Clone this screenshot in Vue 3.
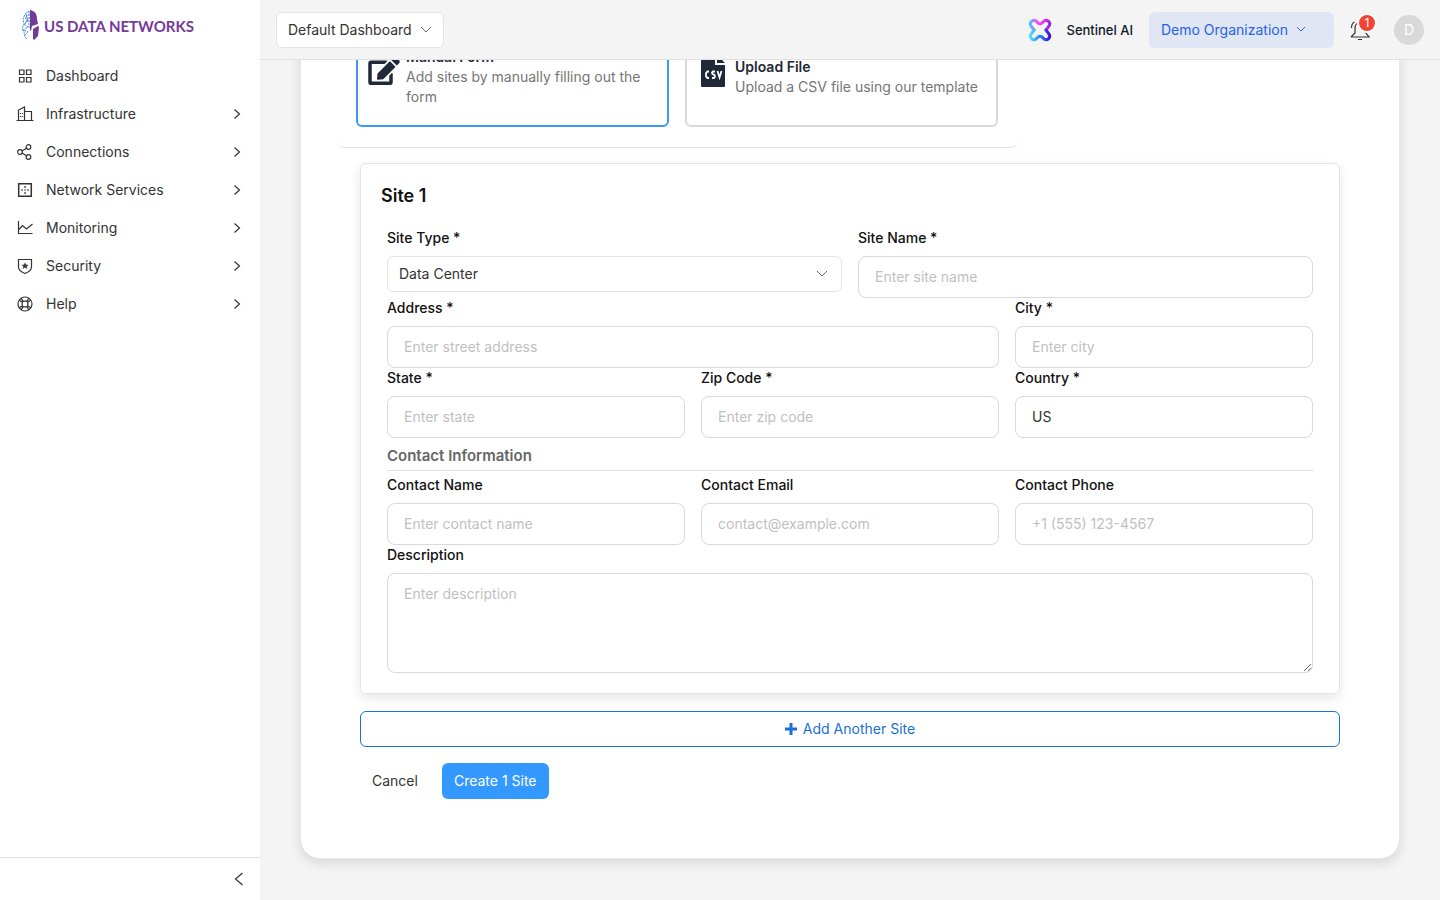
<script setup>
import { ref, reactive } from 'vue'

const menu = [
  { name: 'Dashboard', icon: 'grid', children: false },
  { name: 'Infrastructure', icon: 'building', children: true },
  { name: 'Connections', icon: 'share', children: true },
  { name: 'Network Services', icon: 'network', children: true },
  { name: 'Monitoring', icon: 'chart', children: true },
  { name: 'Security', icon: 'shield', children: true },
  { name: 'Help', icon: 'help', children: true },
]

const fields = [
  { id: 'name', label: 'Site Name *', placeholder: 'Enter site name', size: 'half' },
  { id: 'address', label: 'Address *', placeholder: 'Enter street address', size: 'wide' },
  { id: 'city', label: 'City *', placeholder: 'Enter city', size: 'third' },
  { id: 'state', label: 'State *', placeholder: 'Enter state', size: 'third' },
  { id: 'zip', label: 'Zip Code *', placeholder: 'Enter zip code', size: 'third' },
  { id: 'country', label: 'Country *', placeholder: '', size: 'third' },
]

const contactFields = [
  { id: 'contactName', label: 'Contact Name', placeholder: 'Enter contact name' },
  { id: 'contactEmail', label: 'Contact Email', placeholder: 'contact@example.com' },
  { id: 'contactPhone', label: 'Contact Phone', placeholder: '+1 (555) 123-4567' },
]

const method = ref('manual')
const site = reactive({ type: 'Data Center', country: 'US' })
</script>

<template>
  <div class="layout">
    <aside class="sidebar">
      <a href="#" class="logo">
        <svg width="20" height="30" viewBox="0 0 20 30">
          <path
            d="M8 1L4 4 2 9l1 5-2 5 2 3 1 5 2 2M8 4L4 8l3 3-4 3 4 3-5 3 5 2-3 3M7 8l-3 6M5 4l2 7M8 1v17"
            fill="none"
            stroke="#3b82d6"
            stroke-width="1"
            stroke-dasharray="2 1"
          />
          <path
            d="M9 0c5 1 7 4 7 9l1 5-6 2-1 5-1-1zM12 19l5-3 1 1-1 9-4 4-1-1z"
            fill="#743a9b"
          />
        </svg>
        <span>US DATA NETWORKS</span>
      </a>
      <nav>
        <a v-for="item in menu" :key="item.name" href="#" class="menu-item">
          <svg class="menu-icon" width="18" height="18" viewBox="0 0 18 18">
            <g v-if="item.icon === 'grid'">
              <path d="M3.500 3h4.500v4.500H3.500zM10.500 3H15v4.500h-4.500zM3.500 10.500h4.500V15H3.500zM10.500 10.500H15V15h-4.500z" />
            </g>
            <g v-else-if="item.icon === 'building'">
              <path d="M.5 15.500h17M2.500 15.500V5l6-3v13.500M8.500 6.500h7v9" />
              <path d="M4.500 8v1M6.500 8v1M4.500 11v1M6.500 11v1" />
            </g>
            <g v-else-if="item.icon === 'share'">
              <circle cx="4" cy="9" r="2.300" />
              <circle cx="12.500" cy="4" r="2.300" />
              <circle cx="12.500" cy="14" r="2.300" />
              <path d="M6 8l4.500-2.800M6 10l4.500 2.800" />
            </g>
            <g v-else-if="item.icon === 'network'">
              <path d="M2.700 2.700h12.600v12.600H2.700z" stroke-width="1.500" />
              <path d="M9 5v2M9 8.200v1.600M9 11v2M5 9h2M11 9h2" />
            </g>
            <g v-else-if="item.icon === 'chart'">
              <path d="M2.500 2v12.500h14M3 10.500l3.500-4 4 3.500 6-5" />
            </g>
            <g v-else-if="item.icon === 'shield'">
              <path d="M2.500 2.500h13V10c0 3-4 5.500-6.500 6.500C6.500 15.500 2.500 13 2.500 10z" />
              <path
                d="M9 5.200l1 2.500h2.600l-2 1.700.8 2.700L9 10.600l-2.400 1.500.8-2.700-2-1.700H8z"
                class="solid"
              />
            </g>
            <g v-else>
              <circle cx="9" cy="9" r="7" />
              <rect x="6.200" y="6.200" width="5.600" height="5.600" rx="1.500" />
              <path d="M5 3.200L7.200 6.300M3.200 5l3.100 2.200M13 3.200l-2.200 3.100M14.800 5l-3.100 2.200M5 14.800l2.200-3.100M3.200 13l3.100-2.200M13 14.800l-2.200-3.100M14.800 13l-3.100-2.200" />
            </g>
          </svg>
          <span>{{ item.name }}</span>
          <svg v-if="item.children" class="arrow" width="8" height="12" viewBox="0 0 8 12">
            <path d="M1.500 1.500L6.500 6l-5 4.500" />
          </svg>
        </a>
      </nav>
      <div class="sidebar-footer">
        <button type="button" class="collapse" aria-label="Collapse menu">
          <svg width="10" height="14" viewBox="0 0 10 14">
            <path d="M8.500 1L1.500 7l7 6" />
          </svg>
        </button>
      </div>
    </aside>

    <div class="main">
      <header class="topbar">
        <button type="button" class="dashboard-picker">
          Default Dashboard
          <svg width="12" height="8" viewBox="0 0 12 8"><path d="M1 1l5 5 5-5" /></svg>
        </button>
        <div class="topbar-right">
          <a href="#" class="sentinel">
            <svg width="24" height="24" viewBox="0 0 24 24">
              <defs>
                <linearGradient id="sentinel-top" x1="0" y1="0" x2="1" y2="0">
                  <stop offset="0" stop-color="#40c9ff" />
                  <stop offset=".25" stop-color="#e65cf5" />
                  <stop offset=".7" stop-color="#f035f0" />
                  <stop offset="1" stop-color="#8a25e8" />
                </linearGradient>
                <linearGradient id="sentinel-bottom" x1="0" y1="0" x2="1" y2="0">
                  <stop offset="0" stop-color="#55dcff" />
                  <stop offset=".5" stop-color="#2187f5" />
                  <stop offset="1" stop-color="#3d11d9" />
                </linearGradient>
              </defs>
              <g fill="none" stroke-width="3" stroke-linecap="round">
                <path
                  d="M6 12L3 8a3.600 3.600 0 0 1 5-5l2 2q2 1.500 4 0l2-2a3.600 3.600 0 0 1 5 5l-3 4"
                  stroke="url(#sentinel-top)"
                />
                <path
                  d="M6 12l-3 4a3.600 3.600 0 0 0 5 5l2-2q2-1.500 4 0l2 2a3.600 3.600 0 0 0 5-5l-3-4"
                  stroke="url(#sentinel-bottom)"
                />
              </g>
            </svg>
            <span>Sentinel AI</span>
          </a>
          <button type="button" class="org-picker">
            Demo Organization
            <svg width="10" height="7" viewBox="0 0 10 7"><path d="M1 1l4 4 4-4" /></svg>
          </button>
          <button type="button" class="bell" aria-label="Notifications">
            <svg width="20" height="20" viewBox="0 0 20 20">
              <path d="M1 17h18l-3-4V8c0-3-2-5-6-5S5 5 5 8v5l-4 4M8 19.500h4M1.500 8c0-3 1-5 3-6" />
            </svg>
            <span class="badge">1</span>
          </button>
          <button type="button" class="avatar">D</button>
        </div>
      </header>

      <main class="content">
        <form class="card" @submit.prevent>
          <section class="methods">
            <button
              type="button"
              class="method"
              :class="{ selected: method === 'manual' }"
              @click="method = 'manual'"
            >
              <svg width="32" height="28" viewBox="0 0 576 512" fill="currentColor">
                <path d="M402.600 83.200l90.200 90.200c3.800 3.800 3.800 10 0 13.800L274.400 405.600l-92.800 10.300c-12.400 1.400-22.900-9.100-21.500-21.500l10.300-92.800L388.800 83.200c3.800-3.800 10-3.800 13.800 0zm162-22.900l-48.800-48.800c-15.200-15.200-39.900-15.200-55.200 0l-35.400 35.400c-3.800 3.800-3.800 10 0 13.800l90.200 90.200c3.800 3.800 10 3.800 13.800 0l35.400-35.400c15.200-15.300 15.200-40 0-55.200zM384 346.200V448H64V128h229.800c3.200 0 6.200-1.300 8.500-3.500l40-40c7.600-7.600 2.200-20.500-8.500-20.500H48C21.500 64 0 85.500 0 112v352c0 26.500 21.500 48 48 48h352c26.500 0 48-21.500 48-48V306.200c0-10.700-12.900-16-20.500-8.500l-40 40c-2.200 2.300-3.500 5.300-3.500 8.500z" />
              </svg>
              <span class="method-text">
                <strong>Manual Form</strong>
                <span>Add sites by manually filling out the form</span>
              </span>
            </button>
            <button
              type="button"
              class="method"
              :class="{ selected: method === 'csv' }"
              @click="method = 'csv'"
            >
              <svg width="32" height="32" viewBox="0 0 32 32">
                <path d="M5 0h13v10h10v21a1 1 0 0 1-1 1H5a1 1 0 0 1-1-1V1zM20 0l8 8h-8z" fill="#1f2937" />
                <path
                  d="M12 16.500h-1.500l-1.500 1.500v3.500l1.500 1.500H12M18 16.500h-2l-1 1 .5 1.500 2 1 .5 1.500-1 1.500h-2M20.500 16l2 6.500 2-6.500"
                  fill="none"
                  stroke="#fff"
                  stroke-width="1.800"
                />
              </svg>
              <span class="method-text">
                <strong>Upload File</strong>
                <span>Upload a CSV file using our template</span>
              </span>
            </button>
          </section>

          <div class="sites">
            <section class="site">
              <h2>Site 1</h2>
              <div class="fields">
                <div class="field half">
                  <label for="type">Site Type *</label>
                  <div class="select">
                    <select id="type" v-model="site.type">
                      <option>Data Center</option>
                    </select>
                    <svg width="12" height="8" viewBox="0 0 12 8"><path d="M1 1l5 5 5-5" /></svg>
                  </div>
                </div>
                <div v-for="field in fields" :key="field.id" class="field" :class="field.size">
                  <label :for="field.id">{{ field.label }}</label>
                  <input
                    :id="field.id"
                    v-model="site[field.id]"
                    type="text"
                    :placeholder="field.placeholder"
                  />
                </div>
                <h3>Contact Information</h3>
                <div v-for="field in contactFields" :key="field.id" class="field third">
                  <label :for="field.id">{{ field.label }}</label>
                  <input
                    :id="field.id"
                    v-model="site[field.id]"
                    type="text"
                    :placeholder="field.placeholder"
                  />
                </div>
                <div class="field full">
                  <label for="description">Description</label>
                  <textarea
                    id="description"
                    v-model="site.description"
                    placeholder="Enter description"
                  ></textarea>
                </div>
              </div>
            </section>
            <button type="button" class="add">
              <svg width="12" height="12" viewBox="0 0 12 12">
                <path d="M6 0v12M0 6h12" />
              </svg>
              Add Another Site
            </button>
            <div class="actions">
              <button type="button" class="cancel">Cancel</button>
              <button type="submit" class="create">Create 1 Site</button>
            </div>
          </div>
        </form>
      </main>
    </div>
  </div>
</template>

<style>
body {
  margin: 0;
}
</style>

<style scoped>
* {
  box-sizing: border-box;
}
.layout {
  display: flex;
  height: 100vh;
  font-family: Inter, 'Liberation Sans', sans-serif;
  font-size: 14px;
  line-height: 20px;
  color: #333;
  background-color: #f4f4f4;
}
button,
input,
select,
textarea {
  font: inherit;
  color: inherit;
}
button {
  cursor: pointer;
  border: none;
  background: none;
  padding: 0;
}
a {
  color: inherit;
  text-decoration: none;
}
svg {
  flex-shrink: 0;
}

.sidebar {
  display: flex;
  flex-direction: column;
  flex-shrink: 0;
  width: 260px;
  background-color: white;
}
.logo {
  display: flex;
  align-items: flex-start;
  gap: 3px;
  height: 57px;
  padding: 10px 21px;
  color: #743a9b;
  font-family: Lato, sans-serif;
  font-size: 15px;
  font-weight: 700;
  line-height: 32px;
}
.menu-item {
  display: flex;
  align-items: center;
  gap: 12px;
  height: 38px;
  padding: 0 19px 0 16px;
}
.menu-icon,
.arrow,
.collapse svg,
.bell svg {
  fill: none;
  stroke: #333;
  stroke-width: 1.2;
}
.menu-icon .solid {
  fill: #333;
  stroke: none;
}
.arrow {
  margin-left: auto;
}
.sidebar-footer {
  display: flex;
  justify-content: flex-end;
  margin-top: auto;
  height: 43px;
  padding: 0 12px;
  border-top: 1px solid #e0e0e0;
}
.collapse {
  display: grid;
  place-items: center;
  width: 18px;
}

.main {
  display: flex;
  flex-direction: column;
  flex: 1;
  min-width: 0;
}
.topbar {
  display: flex;
  align-items: center;
  justify-content: space-between;
  flex-shrink: 0;
  height: 60px;
  padding: 0 16px;
  border-bottom: 1px solid #e0e0e2;
}
.dashboard-picker {
  display: flex;
  align-items: center;
  gap: 8px;
  height: 36px;
  padding: 0 11px;
  background-color: white;
  border: 1px solid #e4e4e8;
  border-radius: 6px;
}
.dashboard-picker svg,
.org-picker svg,
.select svg {
  fill: none;
  stroke: #666;
  stroke-width: 1;
}
.topbar-right {
  display: flex;
  align-items: center;
  gap: 16px;
}
.sentinel {
  display: flex;
  align-items: center;
  gap: 14px;
  color: #111827;
  font-size: 13px;
  font-weight: 500;
}
.org-picker {
  display: flex;
  align-items: center;
  gap: 8px;
  width: 185px;
  height: 36px;
  padding: 0 12px;
  border-radius: 6px;
  background-color: #e0e6f4;
  color: #2563eb;
  white-space: nowrap;
}
.org-picker svg {
  stroke: #2563eb;
}
.bell {
  position: relative;
  height: 20px;
  margin-right: 8px;
}
.badge {
  position: absolute;
  top: -7px;
  right: -7px;
  width: 20px;
  height: 20px;
  border: 2px solid white;
  border-radius: 50%;
  background-color: #f44336;
  color: white;
  font-size: 12px;
  line-height: 16px;
}
.avatar {
  width: 30px;
  height: 30px;
  border-radius: 50%;
  background-color: #d9d9d9;
  color: white;
}

/* reversed column keeps the scroll position at the bottom of the form */
.content {
  display: flex;
  flex-direction: column-reverse;
  flex: 1;
  min-height: 0;
  overflow-y: auto;
  scrollbar-width: none;
  padding: 0 40px 41px;
}
.card {
  padding: 36px 35px 59px;
  border: 1px solid #e5e7f0;
  border-radius: 20px;
  background-color: white;
  box-shadow: 0 4px 12px rgba(0, 0, 0, 0.12);
}
.methods {
  display: grid;
  grid-template-columns: 1fr 1fr;
  gap: 16px;
  max-width: 682px;
  padding: 20px;
  margin-bottom: 15px;
  border-bottom: 1px solid #e4e4e4;
  border-radius: 8px;
}
.method {
  display: flex;
  align-items: center;
  gap: 6px;
  height: 100px;
  padding: 0 10px;
  border: 2px solid #d9d9d9;
  border-radius: 6px;
  color: #1f2937;
  text-align: left;
}
.method.selected {
  border-color: #3b98f5;
}
.method svg {
  margin-bottom: 12px;
}
.method-text {
  display: flex;
  flex-direction: column;
}
.method-text strong {
  font-weight: 600;
}
.method-text span {
  color: #757575;
}

.sites {
  padding: 0 24px;
}
.site {
  padding: 20px;
  border: 1px solid #e4e4e8;
  border-radius: 6px;
  box-shadow: 0 4px 12px rgba(0, 0, 0, 0.1);
}
h2 {
  margin: 0 0 20px;
  color: #111;
  font-size: 18px;
  font-weight: 600;
  line-height: 24px;
}
.fields {
  display: grid;
  grid-template-columns: repeat(6, 1fr);
  column-gap: 16px;
  padding: 0 6px;
}
.field {
  min-width: 0;
}
.third {
  grid-column: span 2;
}
.half {
  grid-column: span 3;
}
.wide {
  grid-column: span 4;
}
.full {
  grid-column: span 6;
}
label {
  display: block;
  margin-bottom: 8px;
  color: #111;
  font-weight: 500;
}
input,
textarea {
  display: block;
  width: 100%;
  height: 42px;
  padding: 0 16px 2px;
  border: 1px solid #d9d9d9;
  border-radius: 8px;
  background-color: white;
}
textarea {
  height: 100px;
  padding: 10px 16px;
  resize: vertical;
}
input::placeholder,
textarea::placeholder {
  color: #bfbfbf;
}
.select {
  position: relative;
}
.select select {
  width: 100%;
  height: 36px;
  padding: 0 11px;
  border: 1px solid #e4e4e8;
  border-radius: 6px;
  background-color: white;
  appearance: none;
}
.select svg {
  position: absolute;
  top: 14px;
  right: 14px;
  pointer-events: none;
}
h3 {
  grid-column: span 6;
  margin: 0 0 4px;
  padding: 8px 0 4px;
  border-bottom: 1px solid #e0e0e0;
  color: #666;
  font-size: 15px;
  font-weight: 600;
}
.add {
  display: flex;
  align-items: center;
  justify-content: center;
  gap: 6px;
  width: 100%;
  height: 36px;
  margin: 17px 0 16px;
  border: 1px solid #1a73d9;
  border-radius: 6px;
  color: #1a6fd4;
}
.add svg {
  stroke: #1a6fd4;
  stroke-width: 3;
}
.actions {
  display: flex;
  gap: 12px;
}
.cancel,
.create {
  height: 36px;
  padding: 0 12px;
  border-radius: 6px;
}
.create {
  background-color: #3398ff;
  color: white;
}
</style>
